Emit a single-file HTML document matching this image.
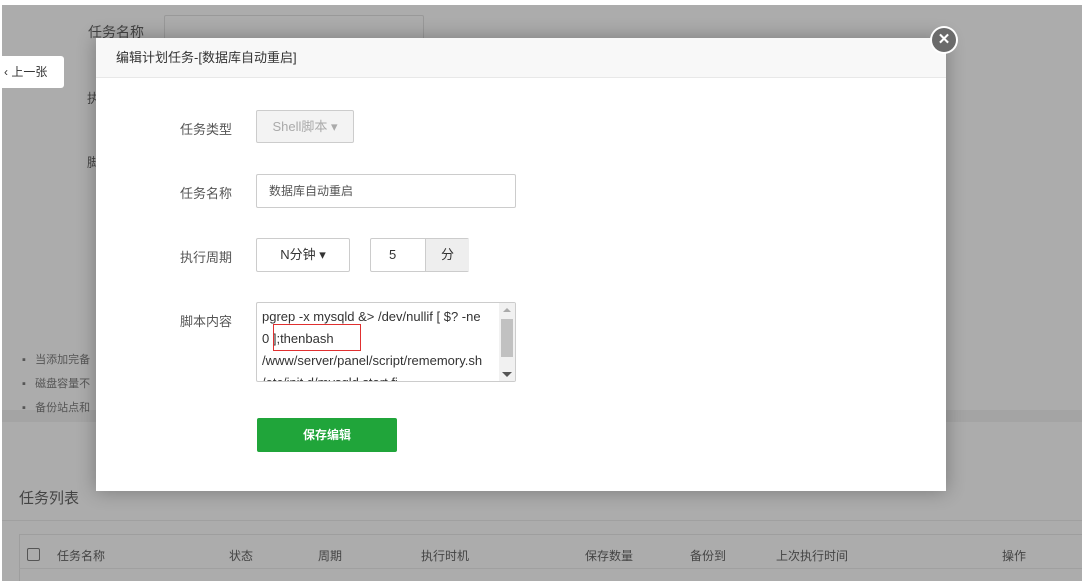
<!DOCTYPE html>
<html><head><meta charset="utf-8"><style>
*{margin:0;padding:0;box-sizing:border-box}
html,body{background:#acacac}
body{width:1082px;height:581px;overflow:hidden;font-family:"Liberation Sans","Noto Sans CJK SC",sans-serif;position:relative}
.a{position:absolute;white-space:nowrap}
.modal{position:absolute;left:96px;top:38px;width:850px;height:453px;background:#fff;box-shadow:0 0 18px rgba(0,0,0,.3)}
.hd{height:40px;background:#f8f8f8;border-bottom:1px solid #e8e8e8;font-size:13px;color:#333;line-height:40px;padding-left:20px}
.lbl{font-size:13px;color:#555}
.box{position:absolute;border:1px solid #ccc;border-radius:2px;background:#fff;font-size:12px;color:#555}
</style></head><body>
<div class="a" style="left:0;top:0;width:1082px;height:5px;background:#fff"></div>
<div class="a" style="left:0;top:0;width:2px;height:581px;background:#fff"></div>
<div class="a" style="left:2px;top:410px;width:1080px;height:12px;background:#a4a4a4"></div>
<div class="a" style="left:2px;top:520px;width:1080px;height:1px;background:#a0a0a0"></div>
<div class="a" style="left:19px;top:534px;width:1063px;height:47px;border:1px solid #9e9e9e;border-right:none;border-bottom:none"></div>
<div class="a" style="left:19px;top:568px;width:1063px;height:1px;background:#a0a0a0"></div>
<div class="a" style="left:88px;top:22px;font-size:14px;color:#444">任务名称</div>
<div class="a" style="left:164px;top:15px;width:260px;height:28px;border:1px solid #999;border-radius:2px"></div>
<div class="a" style="left:0;top:56px;width:64px;height:32px;background:#fff;border-radius:0 3px 3px 0;font-size:12px;color:#333;line-height:32px;padding-left:4px">&lsaquo; 上一张</div>
<div class="a" style="left:87px;top:88px;font-size:13px;color:#444">执</div>
<div class="a" style="left:87px;top:152px;font-size:13px;color:#444">脚</div>
<div class="a" style="left:22px;top:348px;font-size:11px;color:#555;line-height:24px">▪ &nbsp; 当添加完备<br>▪ &nbsp; 磁盘容量不<br>▪ &nbsp; 备份站点和</div>
<div class="a" style="left:19px;top:487px;font-size:15px;color:#444">任务列表</div>
<div class="a" style="left:27px;top:548px;width:13px;height:13px;border:1px solid #555;border-radius:2px"></div>
<div class="a" style="font-size:12px;color:#444;top:547px;left:57px">任务名称</div>
<div class="a" style="font-size:12px;color:#444;top:547px;left:229px">状态</div>
<div class="a" style="font-size:12px;color:#444;top:547px;left:318px">周期</div>
<div class="a" style="font-size:12px;color:#444;top:547px;left:421px">执行时机</div>
<div class="a" style="font-size:12px;color:#444;top:547px;left:585px">保存数量</div>
<div class="a" style="font-size:12px;color:#444;top:547px;left:690px">备份到</div>
<div class="a" style="font-size:12px;color:#444;top:547px;left:776px">上次执行时间</div>
<div class="a" style="font-size:12px;color:#444;top:547px;left:1002px">操作</div>
<div class="modal">
<div class="hd">编辑计划任务-[数据库自动重启]</div>
<div class="a lbl" style="left:84px;top:81px">任务类型</div>
<div class="box" style="left:160px;top:72px;width:98px;height:33px;background:#f3f3f3;color:#aaa;line-height:31px;text-align:center;font-size:13px">Shell脚本 ▾</div>
<div class="a lbl" style="left:84px;top:145px">任务名称</div>
<div class="box" style="left:160px;top:136px;width:260px;height:34px;line-height:32px;padding-left:12px">数据库自动重启</div>
<div class="a lbl" style="left:84px;top:209px">执行周期</div>
<div class="box" style="left:160px;top:200px;width:94px;height:34px;line-height:32px;text-align:center;font-size:13px;color:#333">N分钟 ▾</div>
<div class="box" style="left:274px;top:200px;width:99px;height:34px;line-height:32px;font-size:13px;color:#333"><span style="padding-left:18px">5</span><span style="position:absolute;left:54px;top:0;width:44px;height:32px;background:#eee;border-left:1px solid #ccc;text-align:center">分</span></div>
<div class="a lbl" style="left:84px;top:273px">脚本内容</div>
<div class="box" style="left:160px;top:264px;width:260px;height:80px;overflow:hidden;font-size:13px;color:#333;line-height:22px;padding:3px 0 0 5px;white-space:nowrap">pgrep -x mysqld &amp;&gt; /dev/nullif [ $? -ne<br>0 ];thenbash<br>/www/server/panel/script/rememory.sh<br>/etc/init.d/mysqld start fi
<div style="position:absolute;right:0;top:0;width:16px;height:78px;background:#f1f1f1"><div style="position:absolute;left:2px;top:16px;width:12px;height:38px;background:#c1c1c1"></div><div style="position:absolute;left:4px;top:5px;border:4px solid transparent;border-bottom-color:#aaa;border-top:none"></div><div style="position:absolute;left:3px;bottom:4px;border:5px solid transparent;border-top-color:#555;border-bottom:none"></div></div></div>
<div class="a" style="left:177px;top:286px;width:88px;height:27px;border:1px solid #e03030"></div>
<div class="a" style="left:161px;top:380px;width:140px;height:34px;background:#20a53a;border-radius:2px;color:#fff;font-size:12px;font-weight:bold;text-align:center;line-height:34px">保存编辑</div>
</div>
<div class="a" style="left:930px;top:26px;width:28px;height:28px;border-radius:50%;background:#fff;"><div style="position:absolute;left:2px;top:2px;width:24px;height:24px;border-radius:50%;background:#6b6b6b;color:#fff;font-size:15px;font-weight:bold;line-height:24px;text-align:center">✕</div></div>
</body></html>
